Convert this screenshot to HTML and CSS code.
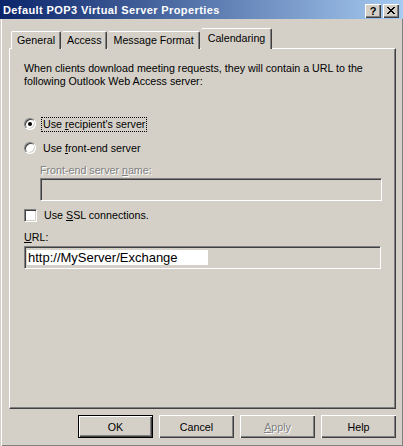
FILE: index.html
```html
<html>

<head>
    <link rel="stylesheet" href="styles.css">
</head>

<body>
    <div class="window">
        <div class="titlebar">
            <span class="title">Default POP3 Virtual Server Properties</span>
            <div class="caption-buttons">
                <div class="caption-btn">?</div>
                <div class="caption-btn close">
                    <svg width="8" height="7" viewBox="0 0 8 7">
                        <path d="M0 0h2v1h1v1h2v-1h1v-1h2v1h-1v1h-1v1h-1v1h1v1h1v1h1v1h-2v-1h-1v-1h-2v1h-1v1h-2v-1h1v-1h1v-1h1v-1h-1v-1h-1v-1h-1z" fill="#000" />
                    </svg>
                </div>
            </div>
        </div>

        <div class="client">
            <div class="tabs">
                <div class="tab">General</div>
                <div class="tab">Access</div>
                <div class="tab">Message Format</div>
                <div class="tab active">Calendaring</div>
            </div>

            <div class="panel">
                <p class="intro">When clients download meeting requests, they will contain a URL to the following Outlook Web Access server:</p>

                <div class="option first">
                    <span class="radio checked"></span>
                    <span class="label focus">Use <u>r</u>ecipient's server</span>
                </div>
                <div class="option">
                    <span class="radio"></span>
                    <span class="label">Use <u>f</u>ront-end server</span>
                </div>

                <div class="indent">
                    <div class="field-label disabled">Front-end server <u>n</u>ame:</div>
                    <div class="textbox"></div>
                </div>

                <div class="option ssl">
                    <span class="checkbox"></span>
                    <span class="label">Use <u>S</u>SL connections.</span>
                </div>

                <div class="field-label url-label"><u>U</u>RL:</div>
                <div class="textbox"><span class="value">http://MyServer/Exchange</span></div>
            </div>

            <div class="buttons">
                <div class="btn default"><span>OK</span></div>
                <div class="btn"><span>Cancel</span></div>
                <div class="btn disabled"><span><u>A</u>pply</span></div>
                <div class="btn"><span>Help</span></div>
            </div>
        </div>
    </div>
</body>

</html>
```

FILE: styles.css
```css
* {
    margin: 0;
    padding: 0;
    box-sizing: border-box;
}

body {
    background-color: #d4d0c8;
    font-family: 'Liberation Sans', Arial, sans-serif;
    font-size: 10.7px;
    color: #000;
}

div.window {
    width: 403px;
    height: 446px;
    background-color: #d4d0c8;
    box-shadow: inset 1px 0 #d4d0c8, inset 2px 0 #fff, inset 0 -1px #808080, inset -1px 0 #808080;
}

/* title bar */
div.titlebar {
    height: 19px;
    display: flex;
    align-items: flex-start;
    justify-content: space-between;
    background: linear-gradient(to right, #0a246a, #a6caf0);
    padding: 0 4px 0 3px;
}

span.title {
    color: #fff;
    font-weight: bold;
    font-size: 11px;
    letter-spacing: 0.4px;
    line-height: 19px;
    padding-top: 1px;
}

div.caption-buttons {
    display: flex;
    gap: 2px;
    margin-top: 4px;
}

div.caption-btn {
    width: 16px;
    height: 14px;
    background-color: #d4d0c8;
    box-shadow: inset 1px 1px #fff, inset -1px -1px #404040, inset -2px -2px #808080;
    font-weight: bold;
    font-size: 11px;
    line-height: 13px;
    text-align: center;
    display: flex;
    justify-content: center;
    align-items: center;
}

div.caption-btn.close svg {
    margin-top: -1px;
}

/* tabs */
div.client {
    padding: 9px 7px 0 9px;
}

div.tabs {
    display: flex;
    align-items: flex-end;
    height: 21px;
    padding-left: 2px;
    margin-bottom: -1px;
    position: relative;
}

div.tab {
    height: 18px;
    padding: 2px 5px 0 5px;
    border-top: 1px solid #fff;
    border-left: 1px solid #fff;
    border-right: 1px solid #404040;
    border-radius: 2px 2px 0 0;
    box-shadow: inset -1px 0 #808080;
    background-color: #d4d0c8;
    white-space: nowrap;
}

div.tab + div.tab {
    border-left: none;
    margin-left: 1px;
}

div.tab.active {
    height: 21px;
    padding: 3px 6px 0 7px;
    margin: 0 -1px 0 -3px;
    border-left: 1px solid #fff;
    position: relative;
    z-index: 1;
}

/* panel */
div.panel {
    height: 361px;
    border-top: 1px solid #fff;
    border-left: 1px solid #fff;
    border-right: 1px solid #404040;
    border-bottom: 1px solid #404040;
    box-shadow: inset -1px -1px #808080;
    padding: 13px 13px 0 14px;
}

p.intro {
    line-height: 13px;
    width: 350px;
}

div.option {
    display: flex;
    align-items: center;
    height: 14px;
    margin-top: 10px;
}

div.option.first {
    margin-top: 29px;
}

span.radio {
    width: 12px;
    height: 12px;
    border-radius: 50%;
    background-color: #fff;
    border: 1px solid;
    border-color: #808080 #fff #fff #808080;
    box-shadow: inset 1px 1px #404040, inset -1px -1px #d4d0c8;
    margin-right: 5px;
    position: relative;
}

span.radio.checked::after {
    content: '';
    position: absolute;
    left: 3px;
    top: 3px;
    width: 4px;
    height: 4px;
    border-radius: 50%;
    background-color: #000;
}

span.checkbox {
    width: 13px;
    height: 13px;
    background-color: #fff;
    border: 1px solid;
    border-color: #808080 #fff #fff #808080;
    box-shadow: inset 1px 1px #404040, inset -1px -1px #d4d0c8;
    margin-right: 5px;
}

span.label {
    line-height: 13px;
    padding: 0 1px;
    border: 1px solid transparent;
}

span.label.focus {
    border: 1px dotted #000;
}

div.indent {
    padding-left: 16px;
    margin-top: 9px;
}

div.field-label {
    line-height: 13px;
}

.disabled {
    color: #808080;
    text-shadow: 1px 1px #fff;
}

div.textbox {
    height: 23px;
    margin-top: 1px;
    border: 1px solid;
    border-color: #808080 #fff #fff #808080;
    box-shadow: inset 1px 1px #404040, inset -1px -1px #d4d0c8;
    padding: 3px 0 0 2px;
}

div.indent div.textbox {
    width: 342px;
}

div.option.ssl {
    margin-top: 7px;
}

div.url-label {
    margin-top: 9px;
}

div.panel > div.textbox {
    width: 357px;
    margin-top: 2px;
}

span.value {
    display: inline-block;
    width: 181px;
    height: 15px;
    line-height: 15px;
    background-color: #fff;
    padding-left: 1px;
    font-size: 13px;
}

/* bottom buttons */
div.buttons {
    display: flex;
    justify-content: flex-end;
    gap: 6px;
    margin-top: 6px;
}

div.btn {
    width: 75px;
    height: 23px;
    display: flex;
    justify-content: center;
    align-items: center;
    box-shadow: inset 1px 1px #fff, inset -1px -1px #404040, inset -2px -2px #808080;
}

div.btn.default {
    border: 1px solid #000;
}
```
